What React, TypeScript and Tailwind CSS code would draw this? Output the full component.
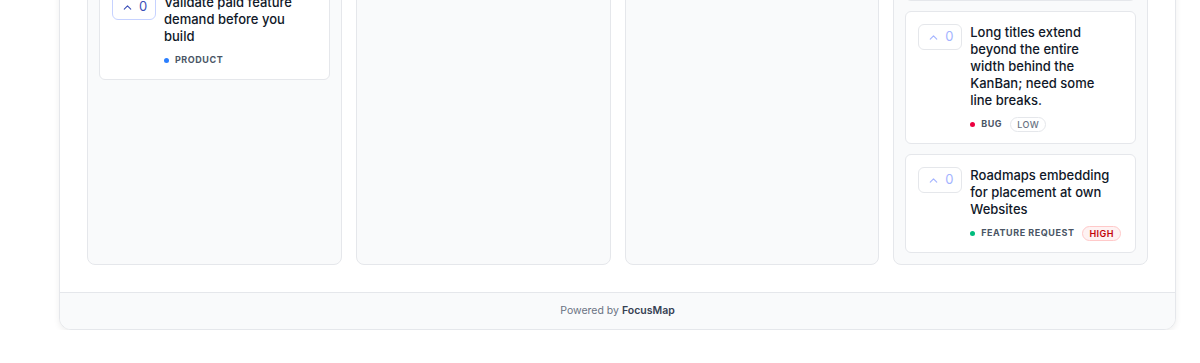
import { ChevronUp } from 'lucide-react'

type Tone = 'blue' | 'red' | 'green' | 'amber'
type Item = {
  title: string
  category: string
  tone: Tone
  priority?: 'low' | 'high'
  active?: boolean
  noTags?: boolean
}

const dotColor: Record<Tone, string> = {
  blue: 'bg-blue-500',
  red: 'bg-rose-600',
  green: 'bg-emerald-500',
  amber: 'bg-amber-500',
}

const columns: { name: string; items: Item[] }[] = [
  {
    name: 'Under review',
    items: [
      {
        title: 'Collect upvotes from the public roadmap page',
        category: 'Feature request',
        tone: 'green',
        active: true,
      },
      {
        title: 'Validate paid feature demand before you build',
        category: 'Product',
        tone: 'blue',
        active: true,
      },
    ],
  },
  { name: 'Planned', items: [] },
  { name: 'In progress', items: [] },
  {
    name: 'Done',
    items: [
      { title: 'Dark mode', category: 'Design', tone: 'amber', noTags: true },
      { title: 'Email digests', category: 'Product', tone: 'blue' },
      {
        title: 'Long titles extend beyond the entire width behind the KanBan; need some line breaks.',
        category: 'Bug',
        tone: 'red',
        priority: 'low',
      },
      {
        title: 'Roadmaps embedding for placement at own Websites',
        category: 'Feature request',
        tone: 'green',
        priority: 'high',
      },
    ],
  },
]

function VoteButton({ active }: { active?: boolean }) {
  return (
    <button
      className={`flex h-[26px] w-[44px] shrink-0 items-center justify-center gap-[5px] rounded-md border bg-white text-[13px] ${
        active ? 'border-indigo-200 text-[#3b4fb8]' : 'border-gray-200 text-indigo-300'
      }`}
    >
      <ChevronUp size={13} strokeWidth={2} />
      <span>0</span>
    </button>
  )
}

function Card({ item }: { item: Item }) {
  return (
    <article
      className={`flex gap-[8px] rounded-md border border-gray-200 bg-white px-3 ${
        item.noTags ? 'py-[13px]' : 'py-3'
      }`}
    >
      <VoteButton active={item.active} />
      <div className="min-w-0 flex-1 pr-2">
        <h3 className="text-[13px] leading-[17px] font-medium text-gray-900">{item.title}</h3>
        {!item.noTags && (
          <div className="mt-2 flex h-[14px] items-center gap-2 whitespace-nowrap">
            <span className="flex items-center gap-[6px] text-[9px] font-bold uppercase tracking-[0.06em] text-gray-600">
              <span className={`size-[5px] rounded-full ${dotColor[item.tone]}`} />
              {item.category}
            </span>
            {item.priority === 'low' && (
              <span className="rounded-full border border-gray-200 px-[6px] text-[9px] leading-[13px] font-medium uppercase tracking-[0.05em] text-gray-500">
                Low
              </span>
            )}
            {item.priority === 'high' && (
              <span className="rounded-full border border-red-200 bg-red-50 px-[6px] text-[9px] leading-[13px] font-semibold uppercase tracking-[0.05em] text-red-700">
                High
              </span>
            )}
          </div>
        )}
      </div>
    </article>
  )
}

export default function App() {
  return (
    <div className="min-h-screen bg-white font-['Inter','Liberation_Sans',sans-serif]">
      <div className="-mt-[259px] pl-[59px] pr-[24px]">
        <div className="overflow-hidden rounded-xl border border-gray-200 bg-white shadow-[0_2px_6px_rgba(0,0,0,0.07)]">
          <header className="flex h-[60px] items-center border-b border-gray-200 px-7">
            <h1 className="text-base font-semibold text-gray-900">Public roadmap</h1>
          </header>

          <div className="grid grid-cols-4 gap-[14px] px-[27px] pt-7 pb-[27px]">
            {columns.map((col) => (
              <section
                key={col.name}
                className="flex flex-col gap-[10px] rounded-lg border border-gray-200 bg-gray-50 p-[11px]"
              >
                <div className="flex h-5 items-center justify-between text-xs font-semibold text-gray-700">
                  <span>{col.name}</span>
                  <span className="text-gray-400">{col.items.length}</span>
                </div>
                {col.items.map((item) => (
                  <Card key={item.title} item={item} />
                ))}
              </section>
            ))}
          </div>

          <footer className="flex h-[37px] items-center justify-center border-t border-gray-200 bg-gray-50 text-[10.5px] text-gray-500">
            Powered by&nbsp;<span className="font-semibold text-gray-700">FocusMap</span>
          </footer>
        </div>
      </div>
    </div>
  )
}
